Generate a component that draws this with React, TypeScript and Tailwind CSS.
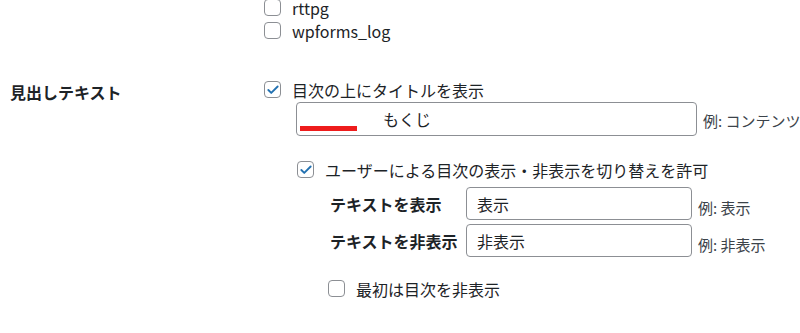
import { Check } from 'lucide-react';

const font = { fontFamily: '"Noto Sans CJK JP", "Noto Sans", sans-serif' };

function Box({ checked = false }: { checked?: boolean }) {
  return (
    <span className="flex h-[17px] w-[17px] shrink-0 items-center justify-center rounded-[4px] border border-[#8c8f94] bg-white">
      {checked && <Check className="h-[14px] w-[14px] text-[#2271b1]" strokeWidth={3.2} />}
    </span>
  );
}

function Option({ label, checked = false }: { label: string; checked?: boolean }) {
  return (
    <label className="flex items-center gap-[11px]">
      <Box checked={checked} />
      <span>{label}</span>
    </label>
  );
}

export default function App() {
  return (
    <div
      className="h-[333px] w-[800px] overflow-hidden bg-white text-[16px] leading-none text-[#1d2327]"
      style={font}
    >
      {/* post types list, scrolled so only its tail shows */}
      <div className="ml-[264px] flex flex-col gap-[6px]">
        <div className="-mt-[1px]">
          <Option label="rttpg" />
        </div>
        <Option label="wpforms_log" />
      </div>

      <div className="mt-[42px] flex">
        <div className="w-[264px] shrink-0 pl-[10px] pt-[3px] font-bold">見出しテキスト</div>

        <div className="flex flex-col">
          <Option label="目次の上にタイトルを表示" checked />

          <div className="ml-[32px] mt-[4px] flex items-center gap-[6px]">
            <div className="relative flex h-[34px] w-[401px] items-center rounded-[4px] border border-[#8c8f94] pl-[86px]">
              <span className="absolute left-[3px] top-[23px] h-[5px] w-[57px] bg-[#ee1c1c]" />
              もくじ
            </div>
            <span className="mt-[2px] whitespace-nowrap text-[15px] text-[#3c434a]">例: コンテンツ</span>
          </div>

          <div className="ml-[33px] mt-[25px]">
            <Option label="ユーザーによる目次の表示・非表示を切り替えを許可" checked />
          </div>

          <div className="ml-[66px] mt-[9px] flex flex-col gap-[4px]">
            {[
              ['テキストを表示', '表示'],
              ['テキストを非表示', '非表示'],
            ].map(([label, value]) => (
              <div key={label} className="flex items-center">
                <span className="w-[136px] shrink-0 font-bold">{label}</span>
                <div className="flex h-[33px] w-[226px] items-center rounded-[4px] border border-[#8c8f94] pl-[10px]">
                  {value}
                </div>
                <span className="ml-[6px] mt-[8px] whitespace-nowrap text-[15px] text-[#3c434a]">例: {value}</span>
              </div>
            ))}
          </div>

          <div className="ml-[64px] mt-[23px]">
            <Option label="最初は目次を非表示" />
          </div>
        </div>
      </div>
    </div>
  );
}
